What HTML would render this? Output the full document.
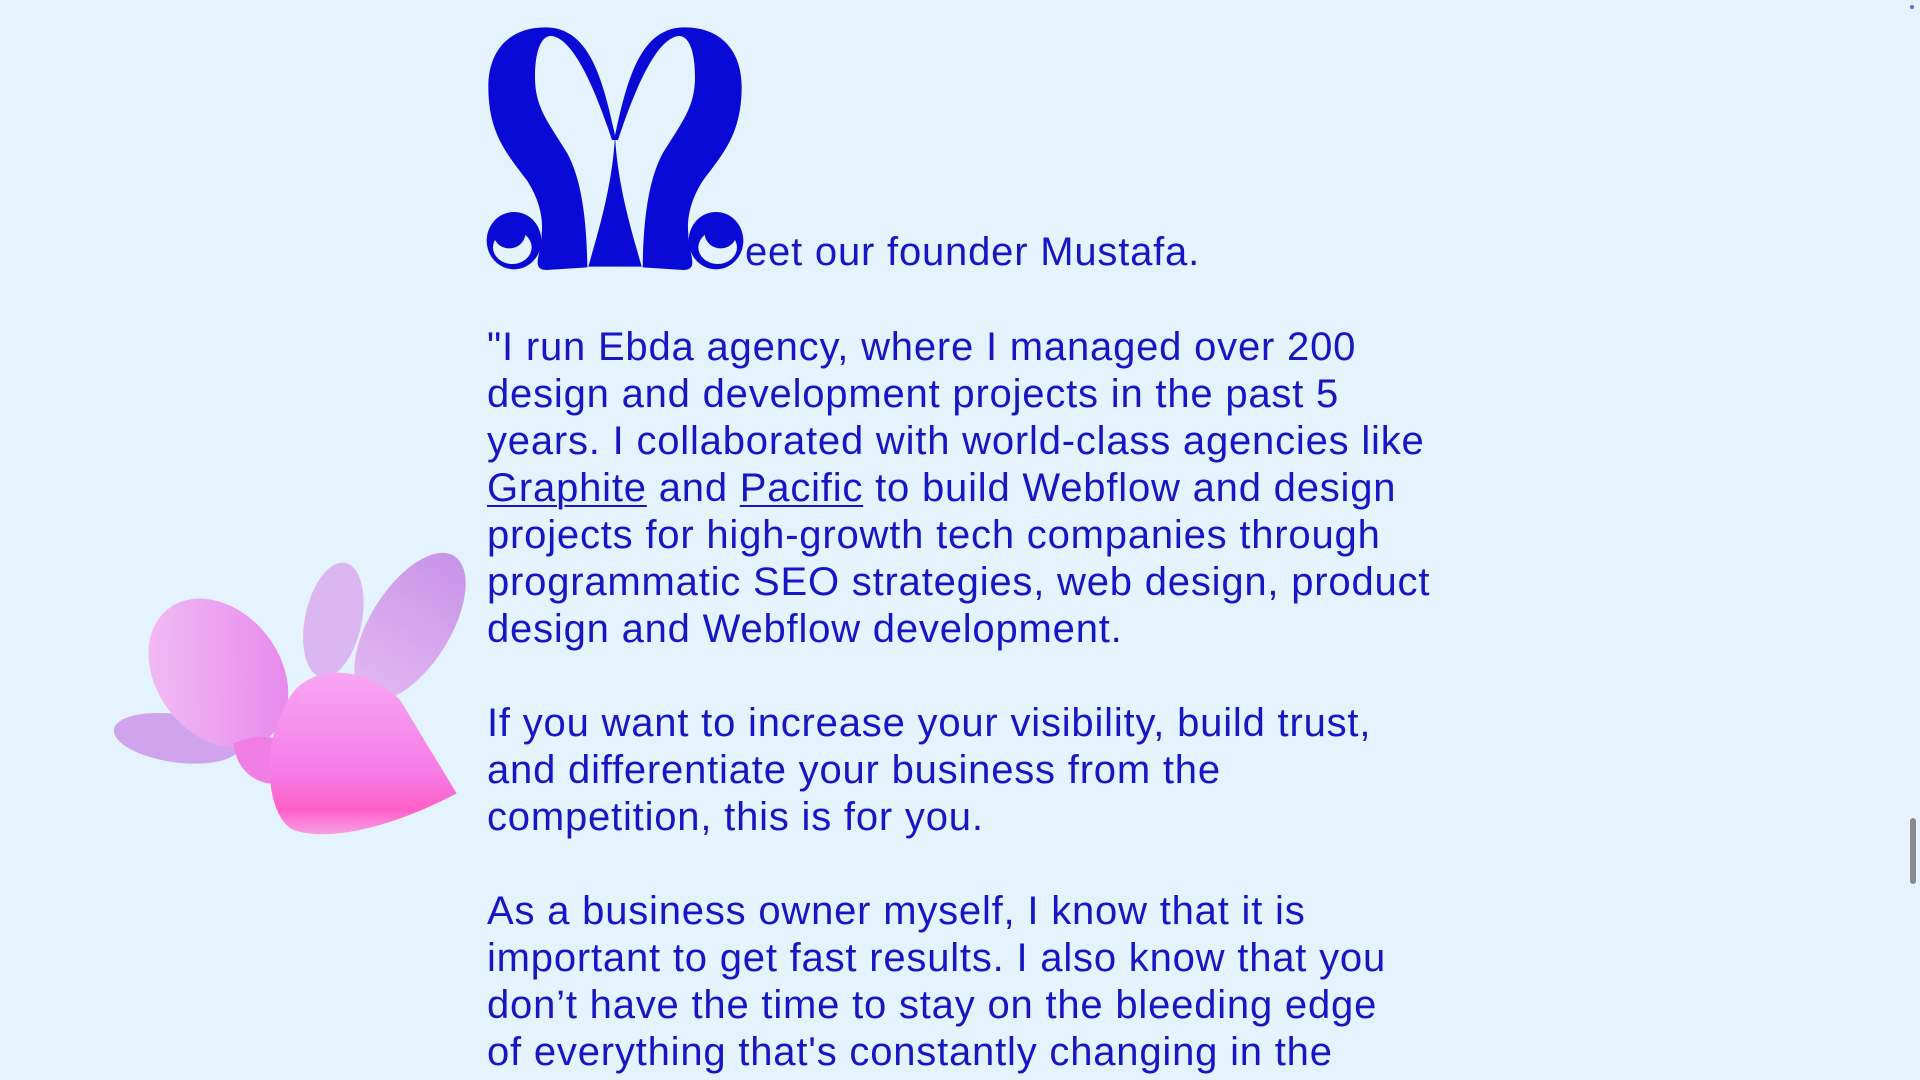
<!DOCTYPE html>
<html><head><meta charset="utf-8"><style>
html,body{margin:0;padding:0;width:1920px;height:1080px;overflow:hidden;background:#e4f3fd;}
#w{position:relative;width:1920px;height:1080px;overflow:hidden;}
.t{position:absolute;left:487px;font-family:"Liberation Sans",sans-serif;font-size:40px;line-height:47px;color:#1616c4;white-space:nowrap;letter-spacing:0.8px;}
.t a{color:#1616c4;text-decoration:underline;text-decoration-thickness:2px;text-underline-offset:4px;}
</style></head><body><div id="w">
<svg style="position:absolute;left:480px;top:20px" width="270" height="260" viewBox="0 0 810 780">
<g fill="#0a0ad6">
<g id="L">
<path d="M408,360 C370,180 330,25 200,22 C90,20 25,90 25,200 C25,340 80,400 140,480 C180,540 190,600 185,640 C185,700 150,750 200,750 L322,742 C320,600 305,480 262,400 C200,300 165,260 165,170 C165,90 185,45 215,48 C270,55 330,160 396,360 Z"/>
<ellipse cx="102" cy="662" rx="82" ry="86"/>
<ellipse cx="97" cy="682" rx="58" ry="50" fill="#e4f3fd"/>
<ellipse cx="88" cy="640" rx="48" ry="45"/>
</g>
<use href="#L" transform="translate(810,0) scale(-1,1)"/>
<path d="M405,345 C398,500 350,650 325,740 L485,740 C460,650 412,500 405,345 Z"/>
</g>
</svg>
<div class="t" style="top:229px;left:745px">eet our founder Mustafa.</div>
<div class="t" style="top:324px">"I run Ebda agency, where I managed over 200<br>design and development projects in the past 5<br>years. I collaborated with world-class agencies like<br><a>Graphite</a> and <a>Pacific</a> to build Webflow and design<br>projects for high-growth tech companies through<br>programmatic SEO strategies, web design, product<br>design and Webflow development.<br>&nbsp;<br>If you want to increase your visibility, build trust,<br>and differentiate your business from the<br>competition, this is for you.<br>&nbsp;<br>As a business owner myself, I know that it is<br>important to get fast results. I also know that you<br>don’t have the time to stay on the bleeding edge<br>of everything that's constantly changing in the<br>market</div>
<svg style="position:absolute;left:100px;top:530px" width="380" height="320" viewBox="0 0 1140 960">
<defs>
<linearGradient id="p1" x1="0" y1="0" x2="1" y2="1"><stop offset="0" stop-color="#f2c4f6"/><stop offset="1" stop-color="#e680ea"/></linearGradient>
<linearGradient id="p2" x1="0" y1="0" x2="0" y2="1"><stop offset="0" stop-color="#c894e8"/><stop offset="1" stop-color="#e2b8f2"/></linearGradient>
<linearGradient id="c" x1="0" y1="0" x2="0" y2="1"><stop offset="0" stop-color="#f8a6f4"/><stop offset="0.6" stop-color="#f57ee8"/><stop offset="0.85" stop-color="#ff5fc8"/><stop offset="1" stop-color="#f7a0e4"/></linearGradient>
</defs>
<ellipse cx="700" cy="270" rx="85" ry="175" transform="rotate(12 700 270)" fill="#dcb6f0"/>
<ellipse cx="930" cy="290" rx="120" ry="250" transform="rotate(32 930 290)" fill="url(#p2)"/>
<ellipse cx="230" cy="625" rx="190" ry="72" transform="rotate(8 230 625)" fill="#cfa4ec"/>
<ellipse cx="355" cy="430" rx="185" ry="245" transform="rotate(-38 355 430)" fill="url(#p1)"/>
<path d="M400,640 C440,620 520,610 560,640 L545,760 C480,770 410,730 400,640 Z" fill="#f07ee4"/>
<path d="M560,520 C600,420 760,380 900,510 L1070,790 C900,880 700,940 580,900 C500,860 480,650 560,520 Z" fill="url(#c)"/>
</svg>
<div style="position:absolute;left:1910px;top:818px;width:6px;height:66px;border-radius:3px;background:#8a8a8a"></div>
<div style="position:absolute;left:1910px;top:5px;width:4px;height:4px;border-radius:2px;background:#5b6fd0"></div>
</div></body></html>
